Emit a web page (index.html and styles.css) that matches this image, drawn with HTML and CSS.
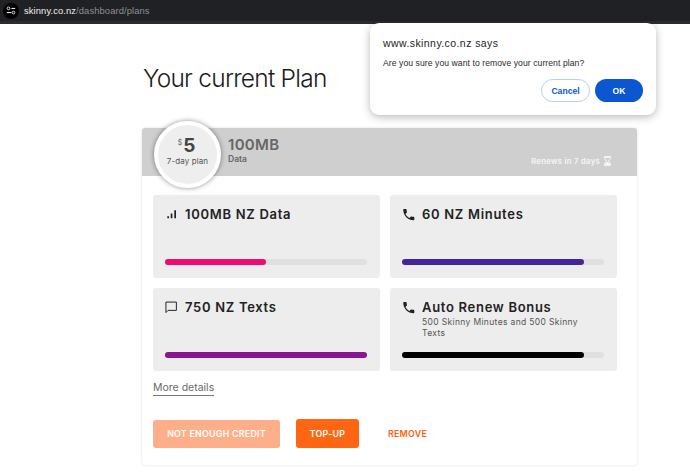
FILE: index.html
```html
<!DOCTYPE html>
<html lang="en">
<head>
<meta charset="utf-8">
<title>Your current Plan</title>
<link rel="stylesheet" href="styles.css">
</head>
<body>
<div class="urlbar">
  <span class="site-icon">
    <svg width="12" height="10" viewBox="0 0 12 10"><circle cx="3" cy="2.5" r="1.6" fill="none" stroke="#fff" stroke-width="1"/><path d="M6.5 2.5H11M1 7.5H6.5" stroke="#fff" stroke-width="1.2"/><circle cx="9" cy="7.5" r="1.6" fill="none" stroke="#fff" stroke-width="1"/></svg>
  </span>
  <span class="url"><span class="url-host">skinny.co.nz</span>/dashboard/plans</span>
</div>
<main class="page">
  <h1 class="title">Your current Plan</h1>
  <section class="card">
    <header class="card-head">
      <div class="badge">
        <div class="price"><span class="dollar">$</span><span class="amount">5</span></div>
        <div class="period">7-day plan</div>
      </div>
      <div class="plan-name">
        <div class="plan-size">100MB</div>
        <div class="plan-type">Data</div>
      </div>
      <div class="renews">Renews in 7 days
        <svg class="hourglass" width="7" height="10" viewBox="0 0 8 11"><path d="M.5.5h7v2.2L5 5.5l2.5 2.8v2.200h-7V8.300L3 5.500.5 2.700z" fill="none" stroke="#fff" stroke-width="1"/><path d="M1.500 9.700h5V8.600L4 6.500 1.500 8.600zM1.500 1.200h5v1H1.500z" fill="#fff"/></svg>
      </div>
    </header>
    <div class="card-body">
      <div class="grid">
        <div class="panel">
          <div class="panel-head">
            <svg class="icon" width="16" height="16" viewBox="0 0 16 16"><path d="M2.300 10.300h1.700v2H2.300zM5.700 7.500h1.700v4.800H5.700zM9.300 4.300h1.700v8H9.300z" fill="#222"/></svg>
            <div class="panel-title">100MB NZ Data</div>
          </div>
          <div class="track"><div class="fill fill-data"></div></div>
        </div>
        <div class="panel">
          <div class="panel-head">
            <svg class="icon" width="16" height="16" viewBox="1 -2 26 26"><path d="M6.600 10.800c1.400 2.800 3.800 5.100 6.600 6.600l2.200-2.200c.3-.3.700-.4 1-.2 1.100.4 2.300.6 3.600.6.600 0 1 .4 1 1V20c0 .6-.4 1-1 1C10.600 21 3 13.400 3 4c0-.6.400-1 1-1h3.500c.6 0 1 .4 1 1 0 1.300.2 2.500.6 3.600.1.300 0 .7-.2 1z" fill="#222"/></svg>
            <div class="panel-title">60 NZ Minutes</div>
          </div>
          <div class="track"><div class="fill fill-min"></div></div>
        </div>
        <div class="panel">
          <div class="panel-head">
            <svg class="icon" width="16" height="16" viewBox="2 -1.500 26 26"><path d="M3.500 3.500h17v13.500H7l-3.500 3.500z" fill="none" stroke="#222" stroke-width="1.600" stroke-linejoin="round"/></svg>
            <div class="panel-title">750 NZ Texts</div>
          </div>
          <div class="track"><div class="fill fill-text"></div></div>
        </div>
        <div class="panel">
          <div class="panel-head">
            <svg class="icon" width="16" height="16" viewBox="1 -2 26 26"><path d="M6.600 10.800c1.400 2.800 3.800 5.100 6.600 6.600l2.200-2.200c.3-.3.700-.4 1-.2 1.100.4 2.300.6 3.600.6.600 0 1 .4 1 1V20c0 .6-.4 1-1 1C10.600 21 3 13.400 3 4c0-.6.400-1 1-1h3.500c.6 0 1 .4 1 1 0 1.300.2 2.500.6 3.600.1.300 0 .7-.2 1z" fill="#222"/></svg>
            <div>
              <div class="panel-title">Auto Renew Bonus</div>
              <div class="panel-sub">500 Skinny Minutes and 500 Skinny Texts</div>
            </div>
          </div>
          <div class="track"><div class="fill fill-bonus"></div></div>
        </div>
      </div>
      <a class="more" href="#">More details</a>
      <div class="actions">
        <button class="btn btn-off">NOT ENOUGH CREDIT</button>
        <button class="btn btn-top">TOP-UP</button>
        <button class="btn btn-remove">REMOVE</button>
      </div>
    </div>
  </section>
</main>
<div class="dialog">
  <div class="dialog-title">www.skinny.co.nz says</div>
  <div class="dialog-msg">Are you sure you want to remove your current plan?</div>
  <div class="dialog-actions">
    <button class="dbtn dbtn-cancel">Cancel</button>
    <button class="dbtn dbtn-ok">OK</button>
  </div>
</div>
</body>
</html>
```
FILE: styles.css
```css
* { box-sizing: border-box; }
html, body { margin: 0; padding: 0; }
body { width: 690px; height: 473px; overflow: hidden; background: #fff; font-family: "Inter", "Liberation Sans", sans-serif; color: #222; position: relative; }
button { font-family: inherit; cursor: pointer; }

.urlbar { height: 24px; background: #202124; border-bottom: 3px solid #2b2c2f; display: flex; align-items: center; padding-left: 3px; gap: 5px; }
.site-icon { width: 16px; height: 16px; border-radius: 50%; background: #000; display: flex; align-items: center; justify-content: center; }
.site-icon svg { width: 10px; height: 9px; }
.url { font: 400 9.4px/1 "Liberation Sans", sans-serif; color: #8e8f92; letter-spacing: .1px; }
.url-host { color: #f1f1f1; }

.page { padding: 0 0 0 142px; width: 637px; }
.title { margin: 39px 0 0 1px; height: 65px; font-size: 24.5px; font-weight: 300; line-height: 30px; color: #1c1c1c; letter-spacing: -.76px; }

.card { width: 495px; height: 337px; border-radius: 3px; box-shadow: 0 0 3px rgba(0,0,0,.12); background: #fff; }
.card-head { height: 48px; background: #cfcfcf; border-radius: 3px 3px 0 0; display: flex; position: relative; padding-left: 86px; }
.badge { position: absolute; left: 12px; top: -7px; width: 67px; height: 67px; border-radius: 50%; background: #eee; border: 4px solid #fff; box-shadow: 0 0 5px rgba(0,0,0,.45); text-align: center; padding-top: 10px; }
.price { display: flex; justify-content: center; align-items: flex-start; height: 21px; padding-right: 2px; }
.dollar { font-size: 7px; color: #666; margin-top: 3px; margin-right: 1px; }
.amount { font-size: 19px; font-weight: 700; line-height: 21px; color: #444; }
.period { font-size: 8px; line-height: 10px; color: #555; white-space: nowrap; letter-spacing: .1px; }
.plan-name { padding-top: 8px; color: #666; }
.plan-size { font-size: 15px; font-weight: 600; line-height: 17px; letter-spacing: .3px; }
.plan-type { font-size: 8.5px; font-weight: 600; line-height: 12px; }
.renews { margin-left: auto; margin-right: 26px; margin-top: 27px; height: 12px; font-size: 7.7px; font-weight: 600; color: #f6f6f6; display: flex; align-items: center; gap: 4px; letter-spacing: .3px; }

.card-body { padding: 19px 20px 0 11px; }
.grid { display: grid; grid-template-columns: 227px 227px; grid-auto-rows: 83px; column-gap: 10px; row-gap: 10px; }
.panel { background: #ededed; border-radius: 3px; padding: 9px 13px 0 12px; display: flex; flex-direction: column; }
.panel-head { display: flex; gap: 3px; height: 55px; }
.icon { flex: none; margin-top: 2px; }
.panel-title { font-size: 13px; font-weight: 600; line-height: 20px; color: #222; letter-spacing: .7px; padding-left: 1px; white-space: nowrap; }
.panel-sub { font-size: 8.5px; line-height: 11px; color: #555; padding-left: 1px; letter-spacing: .35px; width: 170px; }
.track { height: 6px; border-radius: 3px; background: #e0e0e0; width: 202px; }
.fill { height: 100%; border-radius: 3px; }
.fill-data { width: 50%; background: #ef0a70; }
.fill-min { width: 90%; background: #45259a; }
.fill-text { width: 100%; background: #8a1590; }
.fill-bonus { width: 90%; background: #000; }

.more { display: inline-block; margin-top: 10px; font-size: 10.5px; line-height: 14px; color: #6a6a6a; text-decoration: none; border-bottom: 1px solid #777; }
.actions { display: flex; margin-top: 23px; align-items: center; }
.btn { border: 0; border-radius: 3px; font-size: 8.8px; font-weight: 600; color: #fff; padding: 0; letter-spacing: .28px; }
.btn-off { width: 127px; height: 28px; background: #ffae8a; }
.btn-top { width: 63px; height: 29px; margin-left: 16px; background: #ff6614; }
.btn-remove { width: 97px; height: 28px; background: transparent; color: #ff5f0f; }

.dialog { position: absolute; left: 370px; top: 23px; width: 286px; height: 92px; background: #fff; border-radius: 9px; box-shadow: 0 2px 8px rgba(0,0,0,.28); padding: 13px 13px 0; font-family: "Liberation Sans", sans-serif; }
.dialog-title { font-size: 10.5px; font-weight: 400; line-height: 14px; color: #1d1d1f; letter-spacing: .42px; }
.dialog-msg { margin-top: 7px; font-size: 8.6px; line-height: 12px; color: #2a2a2a; letter-spacing: .07px; }
.dialog-actions { display: flex; justify-content: flex-end; gap: 5px; margin-top: 10px; }
.dbtn { height: 23px; border-radius: 12px; font-size: 8.6px; font-weight: 700; font-family: inherit; padding: 0; }
.dbtn-cancel { width: 49px; background: #fff; border: 1px solid #b5d0f7; color: #0b57d0; }
.dbtn-ok { width: 48px; background: #0b57d0; border: 0; color: #fff; }
```
